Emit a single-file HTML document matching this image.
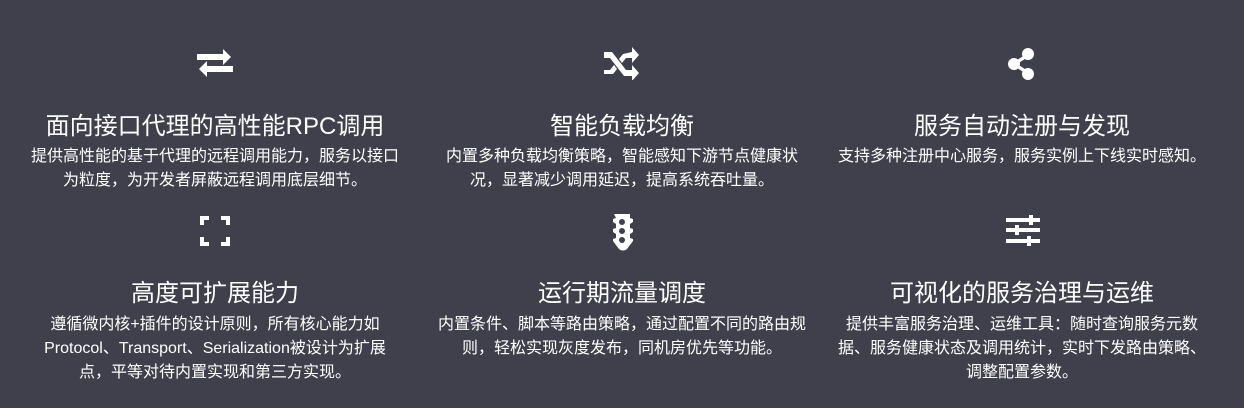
<!DOCTYPE html>
<html><head><meta charset="utf-8"><style>
body{margin:0;width:1244px;height:408px;background:#40404c;overflow:hidden;font-family:"Liberation Sans","Noto Sans CJK SC",sans-serif;color:#fff;position:relative}
.c{position:absolute;width:400px;text-align:center}
.c svg{display:block;margin:0 auto}
h3{margin:0;font-weight:normal;font-size:24px;line-height:30px;position:absolute;left:-20px;right:-20px}
p{margin:0;font-size:16px;line-height:24px;position:absolute;left:-20px;right:-20px}
.i{position:absolute;left:0;right:0}
</style></head><body>
<div class="c" style="left:15px;top:0">
<div class="i" style="top:46px"><svg width="40" height="34" viewBox="0 0 40 34"><path d="M2 8h26v-5l8 8l-8 8v-5H2z M38 20v6H12v5l-8-8l8-8v5z" fill="#fff"/></svg></div>
<h3 style="top:112px">面向接口代理的高性能RPC调用</h3>
<p style="top:145px">提供高性能的基于代理的远程调用能力，服务以接口<br>为粒度，为开发者屏蔽远程调用底层细节。</p>
</div>
<div class="c" style="left:422px;top:0">
<div class="i" style="top:46px"><svg width="40" height="34" viewBox="0 0 40 34"><path d="M2 6h8l14 18h6v-5l7 8l-7 8v-5h-8L8 12H2z M2 24h6l4-5l3 4l-4 5H2z M30 6V1l7 8l-7 8v-5h-6l-4 5l-3-4l4-5z" fill="#fff"/></svg></div>
<h3 style="top:112px">智能负载均衡</h3>
<p style="top:145px">内置多种负载均衡策略，智能感知下游节点健康状<br>况，显著减少调用延迟，提高系统吞吐量。</p>
</div>
<div class="c" style="left:822px;top:0">
<div class="i" style="top:45px"><svg width="40" height="38" viewBox="0 0 40 38"><g fill="#fff"><circle cx="26" cy="9" r="6"/><circle cx="12" cy="19" r="6"/><circle cx="26" cy="29" r="6"/><path d="M12 17l14-9v4l-14 9zM12 17l14 9v4l-14-9z"/></g></svg></div>
<h3 style="top:112px">服务自动注册与发现</h3>
<p style="top:145px">支持多种注册中心服务，服务实例上下线实时感知。</p>
</div>
<div class="c" style="left:15px;top:0">
<div class="i" style="top:214px"><svg width="40" height="34" viewBox="0 0 40 34"><path d="M5 2h9v4H9v5H5zM26 2h9v9h-4V6h-5zM5 23h4v5h5v4H5zM31 23h4v9h-9v-4h5z" fill="#fff"/></svg></div>
<h3 style="top:279px">高度可扩展能力</h3>
<p style="top:313px">遵循微内核+插件的设计原则，所有核心能力如<br>Protocol、Transport、Serialization被设计为扩展<br>点，平等对待内置实现和第三方实现。</p>
</div>
<div class="c" style="left:422px;top:0">
<div class="i" style="top:211px"><svg width="40" height="40" viewBox="0 0 40 40"><path d="M12 3h16v4l3 1v3l-3 2v4l3 1v3l-3 2v4l3 1v2l-6 8c-2 2-6 2-8 0l-6-8v-2l3-1v-4l-3-2v-3l3-1v-4l-3-2V8l3-1z" fill="#fff"/><circle cx="20" cy="11" r="3" fill="#40404c"/><circle cx="20" cy="20" r="3" fill="#40404c"/><circle cx="20" cy="29" r="3" fill="#40404c"/></svg></div>
<h3 style="top:279px">运行期流量调度</h3>
<p style="top:313px">内置条件、脚本等路由策略，通过配置不同的路由规<br>则，轻松实现灰度发布，同机房优先等功能。</p>
</div>
<div class="c" style="left:822px;top:0">
<div class="i" style="top:214px"><svg width="40" height="34" viewBox="0 0 40 34"><g fill="#fff"><rect x="4" y="4" width="34" height="4"/><rect x="4" y="14" width="34" height="4"/><rect x="4" y="25" width="34" height="4"/><rect x="27" y="1" width="4" height="10"/><rect x="13" y="11" width="4" height="10"/><rect x="25" y="22" width="4" height="10"/></g></svg></div>
<h3 style="top:279px">可视化的服务治理与运维</h3>
<p style="top:313px">提供丰富服务治理、运维工具：随时查询服务元数<br>据、服务健康状态及调用统计，实时下发路由策略、<br>调整配置参数。</p>
</div>
</body></html>
